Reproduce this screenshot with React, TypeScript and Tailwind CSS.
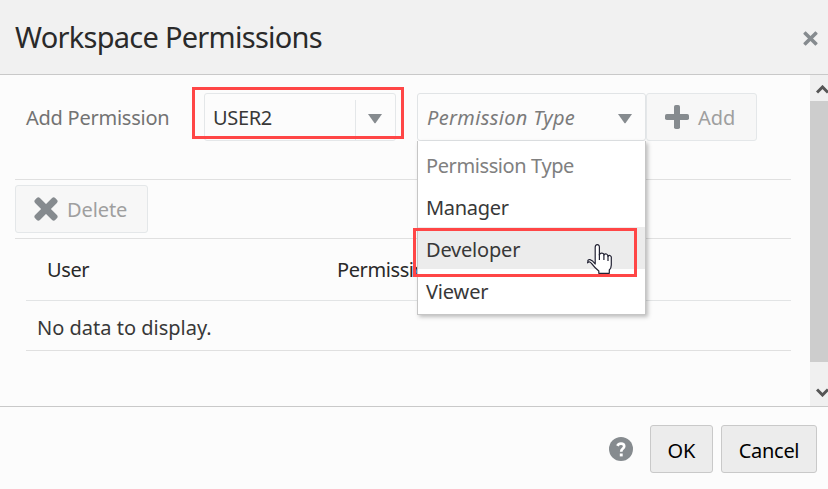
import React from "react";

const Triangle = () => (
  <svg width="14" height="10" viewBox="0 0 14 10" className="block">
    <path d="M0 0H14L7.8 8.7Q7 9.8 6.2 8.7Z" fill="#868b8f" />
  </svg>
);

const options = [
  { label: "Permission Type", style: "text-[#808080] tracking-[-0.4px]" },
  { label: "Manager", style: "text-[#383838] tracking-[-0.3px]" },
  { label: "Developer", style: "bg-[#ececec] text-[#383838] tracking-[-0.2px]" },
  { label: "Viewer", style: "text-[#383838] tracking-[-0.15px]" },
];

function Header() {
  return (
    <header className="flex h-[75px] shrink-0 items-center justify-between border-b border-[#c9c9c9] bg-[#f1f1f1] pr-[10px] pl-[15px]">
      <h1 className="text-[29px] leading-[40px] tracking-[-0.73px] text-[#2a2a2a]">Workspace Permissions</h1>
      <svg width="15" height="15" viewBox="0 0 15 15" className="mt-[2px]">
        <g fill="#868b8f" transform="rotate(45 7.5 7.5)">
          <rect x="-1.2" y="5.7" width="17.4" height="3.6" rx=".8" />
          <rect x="5.7" y="-1.2" width="3.6" height="17.4" rx=".8" />
        </g>
      </svg>
    </header>
  );
}

function UserSelect() {
  return (
    <div className="relative h-12 w-48 rounded-[3px] border border-[#e4e7e9] bg-[#fcfcfc]">
      <div className="flex h-full items-center">
        <span className="w-[150px] pt-[2px] pl-2 tracking-[-0.35px] text-[#383838]">USER2</span>
        <span className="mt-[6px] flex h-[40px] w-[39px] items-start justify-center border-l border-[#e4e7e9] pt-[14px]">
          <Triangle />
        </span>
      </div>
      <div className="absolute -top-[7px] -left-[13px] h-[52px] w-[212px] border-[3px] border-[#ff4646]" />
    </div>
  );
}

function TypeSelect() {
  return (
    <div className="relative ml-[21px] h-12 w-[229px]">
      <div className="flex h-full items-center justify-between rounded-[3px] border border-[#e1e4e6] bg-[#fcfcfc] pr-[13px] pl-[9px]">
        <span className="pt-[2px] tracking-[0.35px] text-[#7b7b7b] italic">Permission Type</span>
        <span className="mt-[3px]"><Triangle /></span>
      </div>
      <div className="absolute top-12 left-0 z-10 h-[174px] w-[229px] border border-t-0 border-[#c6c6c6] bg-white pt-[2px] shadow-[2px_2px_4px_rgba(0,0,0,0.25)]">
        {options.map((o) => (
          <div key={o.label} className={`h-[42px] pl-2 leading-[46px] ${o.style}`}>{o.label}</div>
        ))}
        <svg width="25" height="30" viewBox="0 0 25 30" className="absolute top-[103px] left-[169px]">
          <path d="M8.2 20V3.2Q8.2 .7 10.3 .7T12.4 3.2V11Q13 9 15 9.2T16.9 11Q18 9.5 19.4 10T21 12.3Q22 11 23.3 11.7T24.3 14V21Q24.3 24 22.3 26V29.3H11.8V27Q7 23 4.7 19.7Q2.7 17 1.2 18.2T1 18.2Q.3 15.3 3 15.6Q5.5 16.1 8.2 20Z" fill="white" stroke="#222233" strokeWidth="1.2" strokeLinejoin="round" />
          <path d="M12.4 10V16M16.9 11V16M21 12V17" stroke="#222233" strokeWidth="1.2" />
        </svg>
        <div className="absolute top-[87px] -left-[5px] h-[49px] w-[224px] border-[3px] border-[#ff4646]" />
      </div>
    </div>
  );
}

function Scrollbar() {
  return (
    <div className="flex w-[18px] shrink-0 flex-col overflow-hidden bg-[#f0f0f0]">
      <div className="h-[26px] shrink-0 pt-[10px] pl-[6px]">
        <svg width="14" height="9" viewBox="0 0 14 9"><path d="M1 7.5L6.5 2L12 7.5" fill="none" stroke="#565656" strokeWidth="3" /></svg>
      </div>
      <div className="h-[261px] shrink-0 bg-[#cdcdcd]" />
      <div className="pt-[26px] pl-[6px]">
        <svg width="14" height="9" viewBox="0 0 14 9"><path d="M1 1.5L6.5 7L12 1.5" fill="none" stroke="#565656" strokeWidth="3" /></svg>
      </div>
    </div>
  );
}

export default function App() {
  return (
    <div className="flex h-[489px] w-[828px] flex-col overflow-hidden bg-[#fcfcfc] font-['Noto_Sans',sans-serif] text-[20px] leading-[28px] text-[#383838]">
      <Header />
      <main className="flex h-[332px] shrink-0 border-b border-[#c9c9c9]">
        <div className="w-[810px] pr-[19px] pl-[15px]">
          <div className="flex h-[104px] items-start pt-[18px]">
            <label className="w-[189px] pt-[11px] pl-[11px] tracking-[-0.25px] text-[#737373]">Add Permission</label>
            <UserSelect />
            <TypeSelect />
            <button className="flex h-12 w-[111px] items-center gap-[9px] rounded-[3px] border border-[#e4e7e9] bg-[#f7f7f7] pl-[18px] text-[#9f9f9f]">
              <svg width="24" height="24" viewBox="0 0 24 24" fill="#868b8f">
                <rect x="0" y="9" width="24" height="6" rx="1.8" />
                <rect x="9" y="0" width="6" height="24" rx="1.8" />
              </svg>
              <span className="pt-[2px]">Add</span>
            </button>
          </div>
          <div className="h-[60px] border-y border-[#e0e0e0] pt-[5px]">
            <button className="flex h-12 w-[133px] items-center gap-[9px] rounded-[3px] border border-[#e4e7e9] bg-[#f7f7f7] pl-[18px] text-[#9f9f9f]">
              <svg width="24" height="24" viewBox="0 0 24 24">
                <g fill="#868b8f" transform="rotate(45 12 12)">
                  <rect x="-2.2" y="8.6" width="28.4" height="6.8" rx="2.2" />
                  <rect x="8.6" y="-2.2" width="6.8" height="28.4" rx="2.2" />
                </g>
              </svg>
              <span className="pt-[2px] tracking-[-0.1px]">Delete</span>
            </button>
          </div>
          <div className="ml-[11px]">
            <div className="flex h-[62px] items-center border-b border-[#e2e4e5] pl-[21px] tracking-[-0.4px] text-[#292929]">
              <span className="w-[290px]">User</span>
              <span>Permission</span>
            </div>
            <div className="flex h-[50px] items-center border-b border-[#e0e0e0] pt-[5px] pl-[11px]">No data to display.</div>
          </div>
        </div>
        <Scrollbar />
      </main>
      <footer className="flex items-start justify-end pt-[18px] pr-[11px] text-black">
        <svg width="24" height="24" viewBox="0 0 24 24" className="mt-[12px] mr-[17px]">
          <circle cx="12" cy="12" r="12" fill="#868b8f" />
          <path d="M8.4 8.9Q9.4 6.6 12 6.6Q15.2 6.6 15.2 9.2Q15.2 10.8 13.6 11.8Q12.2 12.7 12.2 14.8" fill="none" stroke="white" strokeWidth="2.7" />
          <rect x="10.8" y="16.5" width="2.9" height="2.9" fill="white" />
        </svg>
        <button className="mr-2 h-12 w-[63px] rounded-[3px] border border-[#c9c9c9] bg-[#ececec] pt-[3px]">OK</button>
        <button className="h-12 w-24 rounded-[3px] border border-[#c9c9c9] bg-[#ececec] pt-[3px] tracking-[-0.3px]">Cancel</button>
      </footer>
    </div>
  );
}
